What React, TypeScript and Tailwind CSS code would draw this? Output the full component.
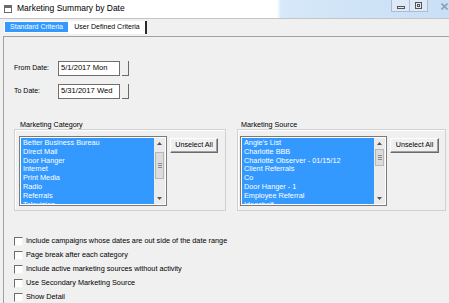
const categories = [
  'Better Business Bureau',
  'Direct Mail',
  'Door Hanger',
  'Internet',
  'Print Media',
  'Radio',
  'Referrals',
  'Television',
];

const sources = [
  "Angie's List",
  'Charlotte BBB',
  'Charlotte Observer - 01/15/12',
  'Client Referrals',
  'Co',
  'Door Hanger - 1',
  'Employee Referral',
  'Ideashelf',
];

const options = [
  'Include campaigns whose dates are out side of the date range',
  'Page break after each category',
  'Include active marketing sources without activity',
  'Use Secondary Marketing Source',
  'Show Detail',
];

function Arrow({ up }: { up?: boolean }) {
  return (
    <div className="flex h-[11px] items-center justify-center">
      <svg width="5" height="3" viewBox="0 0 5 3">
        <path d={up ? 'M0 3 L2.5 0 L5 3 Z' : 'M0 0 L2.5 3 L5 0 Z'} fill="#555" />
      </svg>
    </div>
  );
}

interface ListBoxProps {
  items: string[];
  width: string;
  thumbTop: string;
  thumbHeight: string;
}

function ListBox({ items, width, thumbTop, thumbHeight }: ListBoxProps) {
  return (
    <div className={`flex h-[70px] border border-[#7a7a7a] bg-white p-[1px] ${width}`}>
      <div className="flex-1 overflow-hidden bg-[#3399ff] pl-[2px] pt-[1px]">
        {items.map((it) => (
          <div key={it} className="h-[8.8px] whitespace-nowrap text-[7.3px] leading-[8.8px] text-white">
            {it}
          </div>
        ))}
      </div>
      <div className="flex w-[11px] flex-col bg-[#ebebeb]">
        <Arrow up />
        <div className="flex-1">
          <div
            className={`mx-auto flex w-[9px] flex-col items-center justify-center gap-[1px] border border-[#b8b8b8] bg-[#dcdcdc] ${thumbTop} ${thumbHeight}`}
          >
            <div className="h-px w-[4px] bg-[#8a8a8a]" />
            <div className="h-px w-[4px] bg-[#8a8a8a]" />
            <div className="h-px w-[4px] bg-[#8a8a8a]" />
          </div>
        </div>
        <Arrow />
      </div>
    </div>
  );
}

function UnselectButton({ width }: { width: string }) {
  return (
    <div
      className={`mt-[2px] flex h-[15px] items-center justify-center border border-t-white border-l-white border-r-[#6a6a6a] border-b-[#6a6a6a] bg-[#f0f0f0] text-[7.2px] text-black shadow-[inset_-1px_-1px_0_#a0a0a0] ${width}`}
    >
      Unselect All
    </div>
  );
}

function DateRow({ label, value }: { label: string; value: string }) {
  return (
    <div className="flex items-center pl-[10px]">
      <div className="w-[44px] text-[7px] text-black">{label}</div>
      <div className="flex h-[15px] w-[62px] items-center border border-[#6e6e6e] bg-white pl-[2px] text-[7.6px] text-black">
        {value}
      </div>
      <div className="ml-[2px] mt-[1px] h-[15px] w-[7px] border-r border-b border-r-[#6a6a6a] border-b-[#6a6a6a]" />
    </div>
  );
}

export default function App() {
  return (
    <div className="flex h-[303px] w-[449px] flex-col overflow-hidden bg-[#f0f0f0] font-['Liberation_Sans',Arial,sans-serif]">
      {/* title bar */}
      <div className="flex h-[19px] shrink-0 border-b border-[#c4c4c4] bg-[linear-gradient(to_right,#ffffff_0,#ffffff_277px,#d6e8f9_281px,#c9dff5_100%)]">
        <div className="ml-[4px] mt-[5px] flex h-[8px] w-[8px] items-start border border-[#6a6a6a] bg-white">
          <div className="h-[2px] w-full bg-[#6a6a6a]" />
        </div>
        <div className="ml-[5px] mt-[3px] text-[8.5px] leading-[10px] text-black">Marketing Summary by Date</div>
        <div className="ml-auto flex h-[12px]">
          <div className="flex w-[19px] items-end justify-center border border-t-0 border-[#a9bcd2] bg-[#dde9f6] pb-[2px]">
            <div className="h-[3px] w-[8px] border border-[#555]" />
          </div>
          <div className="flex w-[18px] items-center justify-center border-b border-r border-[#a9bcd2] bg-[#dde9f6]">
            <div className="flex h-[7px] w-[7px] items-center justify-center border border-[#555]">
              <div className="h-[3px] w-[3px] border border-[#555]" />
            </div>
          </div>
          <div className="flex w-[21px] items-center justify-end pr-[1px]">
            <svg width="7" height="7" viewBox="0 0 7 7">
              <path d="M0.5 0.5 L6.5 6.5 M6.5 0.5 L0.5 6.5" stroke="#8aa0b8" strokeWidth="1.6" />
            </svg>
          </div>
        </div>
      </div>

      {/* tab strip */}
      <div className="flex h-[17px] shrink-0 items-start pl-[4px] pt-[2px]">
        <div className="flex h-[12px] w-[65px] items-center justify-center border border-white bg-[#3399ff] text-[7px] text-white">
          Standard Criteria
        </div>
        <div className="flex h-[13px] w-[78px] items-center justify-center border-r-2 border-[#2a2a2a] bg-white text-[7px] text-black">
          User Defined Criteria
        </div>
      </div>

      {/* panel */}
      <div className="ml-[3px] flex flex-1 flex-col border-l border-t border-[#a0a0a0]">
        <div className="mt-[23px] flex flex-col gap-[7px]">
          <DateRow label="From Date:" value="5/1/2017 Mon" />
          <DateRow label="To Date:" value="5/31/2017 Wed" />
        </div>

        <div className="mt-[22px] flex gap-[11px] pl-[10px]">
          <div className="flex w-[212px] flex-col">
            <div className="h-[8px] pl-[6px] text-[7.2px] leading-[8px] text-black">Marketing Category</div>
            <div className="flex h-[82px] gap-[3px] border border-[#d0d0d0] pl-[4px] pt-[6px] shadow-[inset_1px_1px_0_#fff]">
              <ListBox items={categories} width="w-[148px]" thumbTop="mt-[3px]" thumbHeight="h-[27px]" />
              <UnselectButton width="w-[48px]" />
            </div>
          </div>
          <div className="flex w-[209px] flex-col">
            <div className="h-[8px] pl-[4px] text-[7.2px] leading-[8px] text-black">Marketing Source</div>
            <div className="flex h-[82px] gap-[3px] border border-[#d0d0d0] pl-[2px] pt-[6px] shadow-[inset_1px_1px_0_#fff]">
              <ListBox items={sources} width="w-[147px]" thumbTop="mt-0" thumbHeight="h-[17px]" />
              <UnselectButton width="w-[49px]" />
            </div>
          </div>
        </div>

        <div className="mt-[23px] flex flex-col pl-[10px]">
          {options.map((o) => (
            <div key={o} className="flex h-[14px] items-center">
              <div className="h-[9px] w-[9px] border border-t-[#6d6d6d] border-l-[#6d6d6d] border-b-[#f4f4f4] border-r-[#f4f4f4] bg-white" />
              <div className="ml-[3px] whitespace-nowrap text-[7.3px] text-black">{o}</div>
            </div>
          ))}
        </div>
      </div>
    </div>
  );
}
